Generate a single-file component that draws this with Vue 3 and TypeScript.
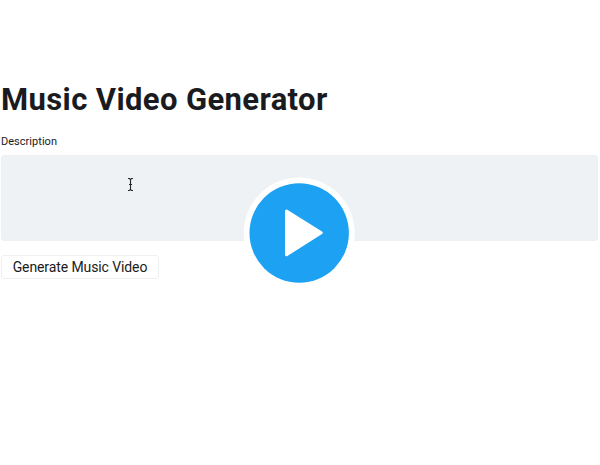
<template>
  <main class="page">
    <h1 class="title">Music Video Generator</h1>

    <form class="form" @submit.prevent>
      <label class="label" for="description">Description</label>
      <div class="field">
        <textarea id="description" v-model="description" class="textarea"></textarea>

        <!-- Text cursor -->
        <svg class="cursor" width="8" height="16" viewBox="0 0 8 16" fill="none">
          <path d="M1 1.5H2.3L3.5 2.5L4.7 1.5H6M3.5 2.5V12.5M1 13.5H2.3L3.5 12.5L4.7 13.5H6M2 7.5H5" stroke="#23272b" stroke-width="1.1" />
        </svg>

        <!-- Play overlay -->
        <button class="play" type="button" aria-label="Play">
          <svg width="112" height="112" viewBox="0 0 112 112">
            <circle cx="56.2" cy="56" r="55.5" fill="#fff" />
            <circle cx="56.2" cy="56" r="49.7" fill="#1da1f2" />
            <path d="M43.5 34L78.2 55.8L43.5 77.8Z" fill="#fff" stroke="#fff" stroke-width="3" stroke-linejoin="round" />
          </svg>
        </button>
      </div>
      <button class="generate" type="submit"><span class="generate-text">Generate Music Video</span></button>
    </form>
  </main>
</template>

<script setup lang="ts">
import { ref } from 'vue'

const description = ref('')
</script>

<style>
body {
  background: #fff;
}
</style>

<style scoped>
.page {
  box-sizing: border-box;
  height: 465px;
  padding: 80px 1px 0;
  overflow: hidden;
  font-family: Roboto, sans-serif;
  color: #1a1b21;
}

.title {
  margin: 0;
  height: 40px;
  font-size: 31px;
  line-height: 40px;
  font-weight: 700;
  letter-spacing: 0.38px;
  white-space: nowrap;
}

.form {
  display: flex;
  flex-direction: column;
  align-items: flex-start;
}

.label {
  margin-top: 14px;
  height: 21px;
  font-size: 11px;
  line-height: 16px;
  letter-spacing: 0.03px;
}

.field {
  position: relative;
  width: 597px;
  height: 86px;
}

.textarea {
  display: block;
  box-sizing: border-box;
  width: 100%;
  height: 100%;
  padding: 8px;
  border: 1px solid #ecf0f3;
  border-radius: 3px;
  background: #eef2f5;
  font: inherit;
  resize: none;
  outline: none;
}

.cursor {
  position: absolute;
  left: 126px;
  top: 22px;
}

.play {
  position: absolute;
  left: 242px;
  top: 22px;
  padding: 0;
  border: 0;
  background: none;
  cursor: pointer;
}

.play svg {
  display: block;
}

.generate {
  box-sizing: border-box;
  width: 158px;
  height: 24px;
  margin-top: 14px;
  padding: 0;
  border: 1px solid #eeeff1;
  border-radius: 3px;
  background: #fff;
  color: #1a1b21;
  font-family: inherit;
  font-size: 14px;
  line-height: 22px;
  letter-spacing: -0.1px;
  white-space: nowrap;
}
</style>
